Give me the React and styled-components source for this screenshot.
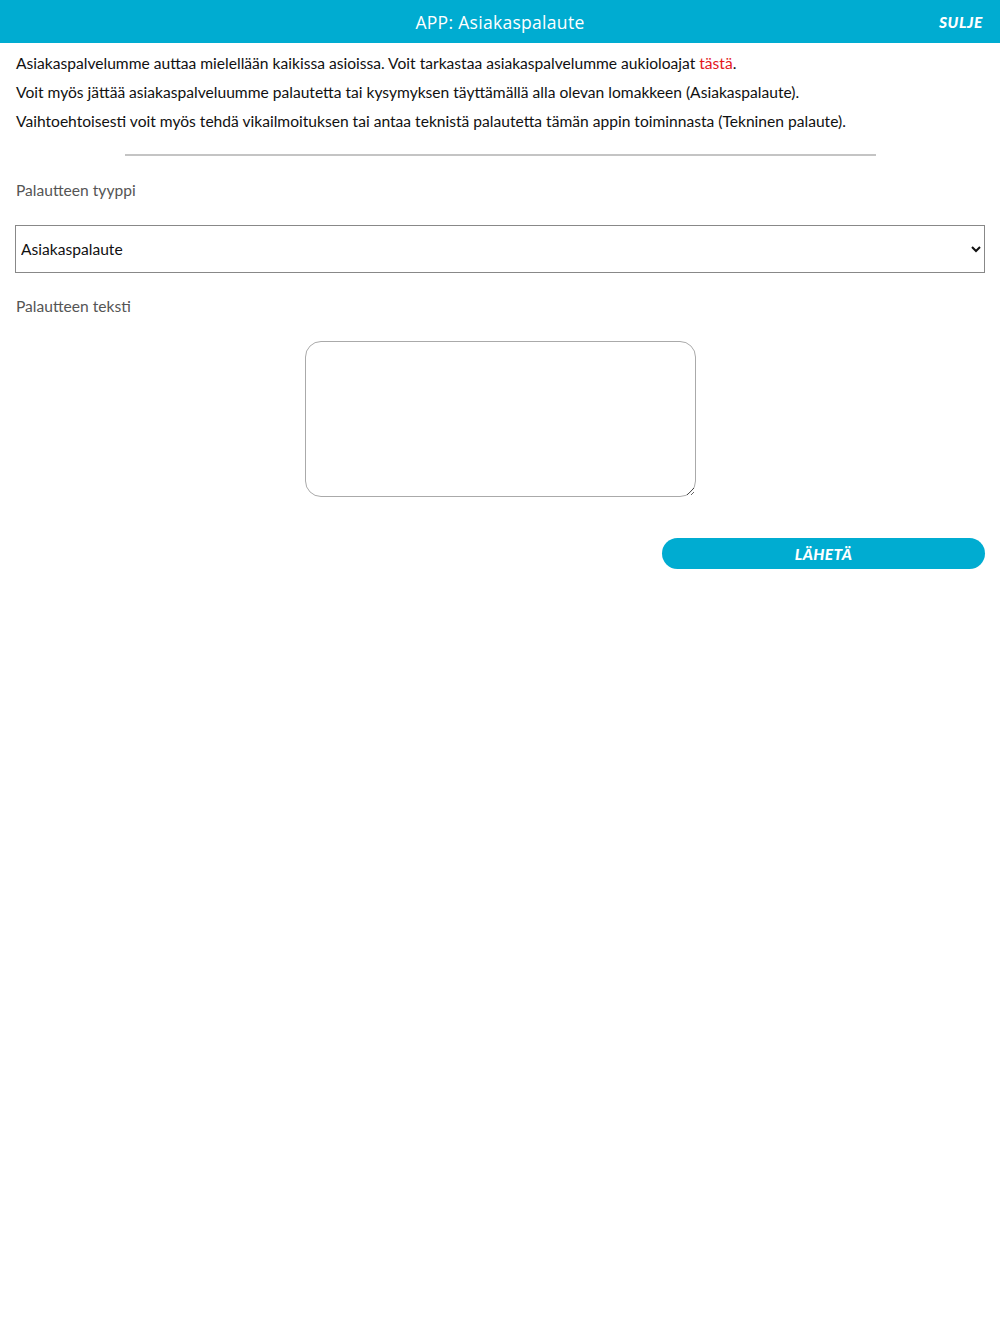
import React, { useState } from 'react';
import styled, { createGlobalStyle } from 'styled-components';

const GlobalStyle = createGlobalStyle`
  body {
    margin: 0;
    background: #fff;
    font-family: Lato, "Open Sans", sans-serif;
  }
`;

const Header = styled.header`
  height: 43px;
  background: #00acd1;
  display: flex;
  align-items: center;
  justify-content: center;
  position: relative;
  color: #fff;
`;

const Title = styled.h1`
  margin: 0;
  font-family: "Open Sans", sans-serif;
  font-weight: 400;
  font-size: 17.5px;
  letter-spacing: 0.3px;
`;

const CloseButton = styled.button`
  position: absolute;
  right: 17px;
  top: 13px;
  background: none;
  border: 0;
  padding: 0;
  color: #fff;
  font-family: Lato, sans-serif;
  font-weight: 900;
  font-style: italic;
  font-size: 15.5px;
  letter-spacing: 0.6px;
  cursor: pointer;
`;

const Content = styled.main`
  padding: 11px 15px 0 16px;
`;

const Paragraph = styled.p`
  margin: 0 0 11px;
  font-size: 15.6px;
  line-height: 18px;
  color: #111;
`;

const Link = styled.a`
  color: #e3171c;
  text-decoration: none;
`;

const Divider = styled.hr`
  width: 751px;
  margin: 24px auto 0;
  border: 0;
  border-top: 2px solid #c4c4c4;
`;

const Label = styled.label`
  display: block;
  font-size: 15.6px;
  line-height: 18px;
  color: #555;
  margin-top: ${p => p.$top}px;
`;

const Select = styled.select`
  display: block;
  width: calc(100% + 1px);
  margin: 26px 0 0 -1px;
  height: 48px;
  padding: 0 1px;
  border: 1px solid #888;
  border-radius: 0;
  background: #fff;
  font-family: Lato, sans-serif;
  font-size: 15.6px;
  color: #111;
`;

const TextWrap = styled.div`
  display: flex;
  justify-content: center;
  margin-top: 26px;
`;

const TextArea = styled.textarea`
  width: 391px;
  height: 156px;
  box-sizing: border-box;
  border: 1px solid #aaa;
  border-radius: 16px;
  padding: 8px;
  font-family: Lato, sans-serif;
  font-size: 16px;
  outline: none;
`;

const ButtonRow = styled.div`
  display: flex;
  justify-content: flex-end;
  margin-top: 41px;
`;

const SendButton = styled.button`
  width: 323px;
  height: 31px;
  border: 0;
  border-radius: 16px;
  background: #00acd1;
  color: #fff;
  font-family: Lato, sans-serif;
  font-weight: 900;
  font-style: italic;
  font-size: 15.5px;
  letter-spacing: 0.4px;
  text-transform: uppercase;
  cursor: pointer;
`;

const App = () => {
  const [type, setType] = useState('asiakas');
  const [text, setText] = useState('');

  return (
    <>
      <GlobalStyle />
      <Header>
        <Title>APP: Asiakaspalaute</Title>
        <CloseButton>SULJE</CloseButton>
      </Header>
      <Content>
        <Paragraph>
          Asiakaspalvelumme auttaa mielellään kaikissa asioissa. Voit tarkastaa asiakaspalvelumme aukioloajat <Link href="#">tästä</Link>.
        </Paragraph>
        <Paragraph>
          Voit myös jättää asiakaspalveluumme palautetta tai kysymyksen täyttämällä alla olevan lomakkeen (Asiakaspalaute).
        </Paragraph>
        <Paragraph>
          Vaihtoehtoisesti voit myös tehdä vikailmoituksen tai antaa teknistä palautetta tämän appin toiminnasta (Tekninen palaute).
        </Paragraph>
        <Divider />
        <Label htmlFor="type" $top={25}>Palautteen tyyppi</Label>
        <Select id="type" value={type} onChange={e => setType(e.target.value)}>
          <option value="asiakas">Asiakaspalaute</option>
          <option value="tekninen">Tekninen palaute</option>
        </Select>
        <Label htmlFor="text" $top={24}>Palautteen teksti</Label>
        <TextWrap>
          <TextArea id="text" value={text} onChange={e => setText(e.target.value)} />
        </TextWrap>
        <ButtonRow>
          <SendButton>Lähetä</SendButton>
        </ButtonRow>
      </Content>
    </>
  );
};

export default App;
